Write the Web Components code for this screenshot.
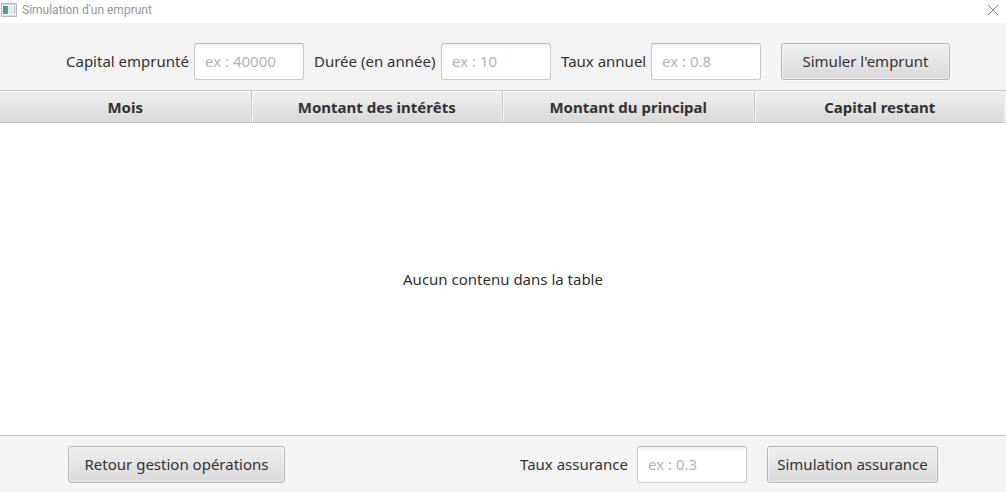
<!DOCTYPE html>
<html lang="fr">
<head>
<meta charset="utf-8">
<meta name="viewport" content="width=device-width, initial-scale=1">
<title>Simulation d'un emprunt</title>
<style>
  html, body { height: 100%; margin: 0; }
  body {
    background: #f4f4f4;
    color: #323232;
    font: 15px/20px "Noto Sans", "Open Sans", sans-serif;
  }
</style>
</head>
<body>
<loan-app></loan-app>
<script>
  class BaseElement extends HTMLElement {
    constructor() {
      super();
      this.attachShadow({ mode: "open" });
    }
    connectedCallback() {
      if (!this.shadowRoot.childNodes.length) this.shadowRoot.innerHTML = this.template();
    }
  }

  class WindowBar extends BaseElement {
    template() {
      return `
      <style>
        :host { display: flex; align-items: center; height: 23px; box-sizing: border-box;
          padding: 0 8px 3px 1px; background: #fff; color: #969696;
          font-family: Roboto, "Open Sans", sans-serif; font-size: 12px; line-height: 20px; }
        h1 { flex: 1; margin: 0 0 0 5px; font: inherit; }
        svg { display: block; }
        button { border: 0; padding: 0; background: none; }
      </style>
      <svg width="16" height="14" viewBox="0 0 16 14" aria-hidden="true">
        <defs><linearGradient id="pane" x1="0" y1="0" x2="1" y2="1">
          <stop offset="0" stop-color="#4c7fa6"/><stop offset="1" stop-color="#55b27a"/>
        </linearGradient></defs>
        <rect x=".5" y=".5" width="15" height="13" fill="#f6f8f9" stroke="#b4bcc2"/>
        <rect x="1" y="1" width="14" height="1" fill="#c5ced6"/>
        <rect x="2" y="3" width="5" height="8" fill="url(#pane)"/>
        <rect x="7" y="3" width="5" height="8" fill="#e6e9ea"/>
        <rect x="13" y="3" width="1" height="8" fill="#9cc4b6"/>
        <rect x="1" y="12" width="14" height="1" fill="#d8dde1"/>
      </svg>
      <h1><slot></slot></h1>
      <button type="button" aria-label="Fermer">
        <svg width="10" height="10" viewBox="0 0 10 10"><path d="M0 0L10 10M10 0L0 10" stroke="#8c8c8c" fill="none"/></svg>
      </button>`;
    }
  }

  class TextField extends BaseElement {
    template() {
      return `
      <style>
        :host { display: flex; align-items: center; justify-content: space-between; white-space: nowrap; }
        label { padding-bottom: 2px; }
        input { box-sizing: border-box; width: 110px; height: 37px; margin: 0; padding: 0 10px 2px;
          border: 1px solid #c8c8c8; border-top-color: #bababa; border-radius: 3px;
          background: linear-gradient(#f0f0f0, #fff 5px); color: #323232; font: inherit; outline: 0; }
        input::placeholder { color: #b4b4b4; opacity: 1; }
      </style>
      <label for="field">${this.getAttribute("label")}</label>
      <input id="field" type="text" inputmode="decimal" placeholder="${this.getAttribute("hint")}">`;
    }
  }

  class PushButton extends BaseElement {
    template() {
      return `
      <style>
        :host { display: block; }
        button { display: block; box-sizing: border-box; width: 100%; height: 37px; margin: 0; padding: 0 0 2px;
          border: 1px solid #b5b5b5; border-radius: 3px;
          background: linear-gradient(#efefef, #d9d9d9); box-shadow: inset 0 0 0 1px #ffffff70, 0 1px #f9f9f9;
          color: #323232; font: inherit; white-space: nowrap; }
      </style>
      <button type="button"><slot></slot></button>`;
    }
  }

  class DataTable extends BaseElement {
    template() {
      const columns = this.getAttribute("columns").split("|");
      return `
      <style>
        :host { display: grid; background: #fff; border: solid #c8c8c8; border-width: 1px 0; }
        table { width: 100%; height: 100%; border-collapse: separate; border-spacing: 0; table-layout: fixed; }
        th { box-sizing: border-box; height: 32px; padding: 0; font-weight: 700;
          background: linear-gradient(#efefef, #d9d9d9);
          border-bottom: 1px solid #c8c8c8; border-right: 1px solid #c4c4c4;
          box-shadow: inset 1px 1px #f8f8f8, inset -1px 0 #ececec; }
        th:first-child { box-shadow: inset 0 1px #f8f8f8, inset -1px 0 #ececec; }
        th:last-child { border-right-color: #f4f4f4; }
        td { padding: 0; text-align: center; vertical-align: middle; }
      </style>
      <table>
        <thead><tr>${columns.map(c => `<th scope="col">${c}</th>`).join("")}</tr></thead>
        <tbody><tr><td colspan="${columns.length}"><slot></slot></td></tr></tbody>
      </table>`;
    }
  }

  class LoanApp extends BaseElement {
    template() {
      return `
      <style>
        :host { display: flex; flex-direction: column; min-height: 100%; }
        form { display: flex; flex-wrap: wrap; justify-content: center; gap: 10px; padding: 20px 50px 10px 60px; }
        .capital { width: 238px; }
        .years { width: 237px; }
        .rate { width: 200px; }
        .run { width: 169px; margin-left: 10px; }
        data-table { flex: 1; }
        footer { display: flex; flex-wrap: wrap; align-items: center; justify-content: space-between;
          gap: 10px 20px; padding: 10px 68px 9px; }
        .back { width: 217px; margin-right: auto; }
        .insurance { width: 227px; }
        .simulate { width: 171px; }
      </style>
      <window-bar>Simulation d'un emprunt</window-bar>
      <form>
        <text-field class="capital" label="Capital emprunté" hint="ex : 40000"></text-field>
        <text-field class="years" label="Durée (en année)" hint="ex : 10"></text-field>
        <text-field class="rate" label="Taux annuel" hint="ex : 0.8"></text-field>
        <push-button class="run">Simuler l'emprunt</push-button>
      </form>
      <data-table columns="Mois|Montant des intérêts|Montant du principal|Capital restant">Aucun contenu dans la table</data-table>
      <footer>
        <push-button class="back">Retour gestion opérations</push-button>
        <text-field class="insurance" label="Taux assurance" hint="ex : 0.3"></text-field>
        <push-button class="simulate">Simulation assurance</push-button>
      </footer>`;
    }
  }

  customElements.define("window-bar", WindowBar);
  customElements.define("text-field", TextField);
  customElements.define("push-button", PushButton);
  customElements.define("data-table", DataTable);
  customElements.define("loan-app", LoanApp);
</script>
</body>
</html>
